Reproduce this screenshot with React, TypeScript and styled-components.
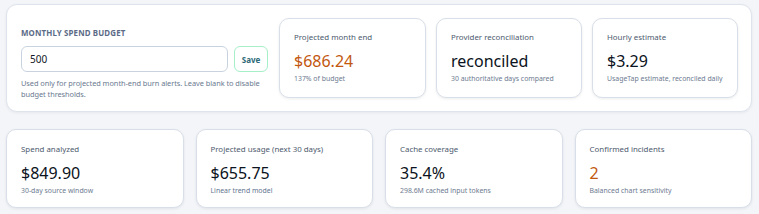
import React from 'react';
import styled, { createGlobalStyle } from 'styled-components';

const GlobalStyle = createGlobalStyle`
  html, body {
    margin: 0;
    padding: 0;
    background: #f3f5f9;
    font-family: "Noto Sans", "Open Sans", sans-serif;
  }
`;

type Stat = {
  title: string;
  value: string;
  note: string;
  tone?: 'warn' | 'plain';
  noteTone?: 'link';
};

const topStats: Stat[] = [
  { title: 'Projected month end', value: '$686.24', note: '137% of budget', tone: 'warn' },
  { title: 'Provider reconciliation', value: 'reconciled', note: '30 authoritative days compared' },
  { title: 'Hourly estimate', value: '$3.29', note: 'UsageTap estimate, reconciled daily' },
];

const bottomStats: Stat[] = [
  { title: 'Spend analyzed', value: '$849.90', note: '30-day source window' },
  { title: 'Projected usage (next 30 days)', value: '$655.75', note: 'Linear trend model', noteTone: 'link' },
  { title: 'Cache coverage', value: '35.4%', note: '298.6M cached input tokens' },
  { title: 'Confirmed incidents', value: '2', note: 'Balanced chart sensitivity', tone: 'warn' },
];

function StatCard({ stat }: { stat: Stat }) {
  return (
    <Card>
      <CardTitle>{stat.title}</CardTitle>
      <CardValue $tone={stat.tone}>{stat.value}</CardValue>
      <CardNote $tone={stat.noteTone}>{stat.note}</CardNote>
    </Card>
  );
}

export default function App() {
  return (
    <Page>
      <GlobalStyle />
      <Panel>
        <Budget>
          <BudgetLabel>Monthly spend budget</BudgetLabel>
          <InputRow>
            <BudgetInput defaultValue="500" />
            <SaveButton>Save</SaveButton>
          </InputRow>
          <Help>
            Used only for projected month-end burn alerts. Leave blank to disable budget thresholds.
          </Help>
        </Budget>
        {topStats.map((s) => (
          <StatCard key={s.title} stat={s} />
        ))}
      </Panel>
      <Row>
        {bottomStats.map((s) => (
          <StatCard key={s.title} stat={s} />
        ))}
      </Row>
    </Page>
  );
}

const Page = styled.div`
  padding: 4px 7px 6px 6px;
  display: flex;
  flex-direction: column;
  gap: 17px;
`;

const Panel = styled.section`
  box-sizing: border-box;
  width: 746px;
  height: 108px;
  background: #fff;
  border: 1px solid #dfe4ec;
  border-radius: 11px;
  box-shadow: 0 1px 3px rgba(15, 23, 42, 0.06);
  padding: 13px 12px 14px 14px;
  display: grid;
  grid-template-columns: 248px 147px 146px 146px;
  column-gap: 10px;
  align-items: stretch;
`;

const Budget = styled.div`
  display: flex;
  flex-direction: column;
  padding-top: 10px;
`;

const BudgetLabel = styled.div`
  font-size: 7.9px;
  font-weight: 700;
  letter-spacing: 0.15px;
  text-transform: uppercase;
  color: #5b6b86;
  margin-bottom: 8px;
`;

const InputRow = styled.div`
  display: flex;
  gap: 6px;
`;

const BudgetInput = styled.input`
  box-sizing: border-box;
  width: 207px;
  height: 26px;
  border: 1px solid #c9d3e0;
  border-radius: 6px;
  padding: 0 8px;
  font-family: inherit;
  font-size: 10px;
  color: #111827;
  outline: none;
`;

const SaveButton = styled.button`
  box-sizing: border-box;
  width: 34px;
  height: 26px;
  border: 1px solid #a6efc9;
  border-radius: 6px;
  background: #fff;
  font-family: inherit;
  font-size: 8px;
  font-weight: 700;
  color: #2c6a78;
  padding: 0;
`;

const Help = styled.p`
  margin: 6px 0 0;
  font-size: 7.4px;
  letter-spacing: -0.06px;
  line-height: 11px;
  color: #6b7a90;
`;

const Card = styled.div`
  box-sizing: border-box;
  height: 80px;
  background: #fff;
  border: 1px solid #d9dfe8;
  border-radius: 10px;
  box-shadow: 0 1px 3px rgba(15, 23, 42, 0.08);
  padding: 13px 14px 0 14px;
  display: flex;
  flex-direction: column;
`;

const CardTitle = styled.div`
  font-size: 7.9px;
  color: #4d5a6e;
  line-height: 11px;
`;

const CardValue = styled.div<{ $tone?: 'warn' | 'plain' }>`
  margin-top: 8px;
  font-size: 16px;
  line-height: 20px;
  color: ${(p) => (p.$tone === 'warn' ? '#c2570f' : '#0b1220')};
`;

const CardNote = styled.div<{ $tone?: 'link' }>`
  margin-top: 3px;
  font-size: 6.9px;
  line-height: 9px;
  white-space: nowrap;
  color: ${(p) => (p.$tone === 'link' ? '#5f7590' : '#6d7b90')};
`;

const Row = styled.div`
  display: grid;
  grid-template-columns: repeat(4, 1fr);
  column-gap: 12px;
  width: 746px;

  ${Card} {
    height: 79px;
    padding-top: 14px;
  }
`;
